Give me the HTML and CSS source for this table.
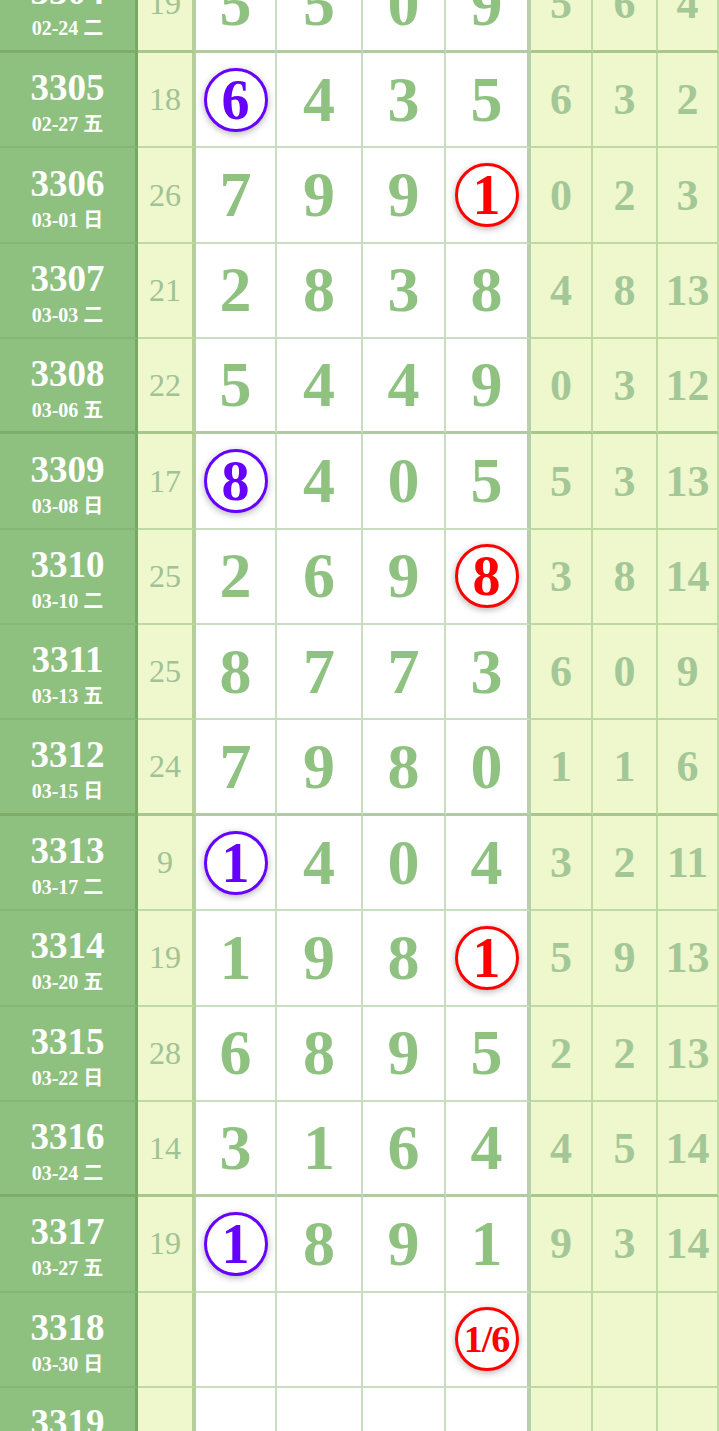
FILE: index.html
```html
<!DOCTYPE html>
<html lang="zh">
  <head>
    <meta charset="UTF-8" />
    <meta name="viewport" content="width=device-width, initial-scale=1.0" />
    <title>走势图</title>
    <link rel="stylesheet" href="styles.css">
  </head>
  <body>
    <div class="chart">
      <div class="row group">
        <div class="issue"><b>3304</b><span>02-24 二</span></div>
        <div class="sum">19</div>
        <div class="num">5</div><div class="num">5</div><div class="num">0</div><div class="num last">9</div>
        <div class="gap">5</div><div class="gap">6</div><div class="gap">4</div>
      </div>
      <div class="row">
        <div class="issue"><b>3305</b><span>02-27 五</span></div>
        <div class="sum">18</div>
        <div class="num"><i class="ball blue">6</i></div><div class="num">4</div><div class="num">3</div><div class="num last">5</div>
        <div class="gap">6</div><div class="gap">3</div><div class="gap">2</div>
      </div>
      <div class="row">
        <div class="issue"><b>3306</b><span>03-01 日</span></div>
        <div class="sum">26</div>
        <div class="num">7</div><div class="num">9</div><div class="num">9</div><div class="num last"><i class="ball red">1</i></div>
        <div class="gap">0</div><div class="gap">2</div><div class="gap">3</div>
      </div>
      <div class="row">
        <div class="issue"><b>3307</b><span>03-03 二</span></div>
        <div class="sum">21</div>
        <div class="num">2</div><div class="num">8</div><div class="num">3</div><div class="num last">8</div>
        <div class="gap">4</div><div class="gap">8</div><div class="gap">13</div>
      </div>
      <div class="row group">
        <div class="issue"><b>3308</b><span>03-06 五</span></div>
        <div class="sum">22</div>
        <div class="num">5</div><div class="num">4</div><div class="num">4</div><div class="num last">9</div>
        <div class="gap">0</div><div class="gap">3</div><div class="gap">12</div>
      </div>
      <div class="row">
        <div class="issue"><b>3309</b><span>03-08 日</span></div>
        <div class="sum">17</div>
        <div class="num"><i class="ball blue">8</i></div><div class="num">4</div><div class="num">0</div><div class="num last">5</div>
        <div class="gap">5</div><div class="gap">3</div><div class="gap">13</div>
      </div>
      <div class="row">
        <div class="issue"><b>3310</b><span>03-10 二</span></div>
        <div class="sum">25</div>
        <div class="num">2</div><div class="num">6</div><div class="num">9</div><div class="num last"><i class="ball red">8</i></div>
        <div class="gap">3</div><div class="gap">8</div><div class="gap">14</div>
      </div>
      <div class="row">
        <div class="issue"><b>3311</b><span>03-13 五</span></div>
        <div class="sum">25</div>
        <div class="num">8</div><div class="num">7</div><div class="num">7</div><div class="num last">3</div>
        <div class="gap">6</div><div class="gap">0</div><div class="gap">9</div>
      </div>
      <div class="row group">
        <div class="issue"><b>3312</b><span>03-15 日</span></div>
        <div class="sum">24</div>
        <div class="num">7</div><div class="num">9</div><div class="num">8</div><div class="num last">0</div>
        <div class="gap">1</div><div class="gap">1</div><div class="gap">6</div>
      </div>
      <div class="row">
        <div class="issue"><b>3313</b><span>03-17 二</span></div>
        <div class="sum">9</div>
        <div class="num"><i class="ball blue">1</i></div><div class="num">4</div><div class="num">0</div><div class="num last">4</div>
        <div class="gap">3</div><div class="gap">2</div><div class="gap">11</div>
      </div>
      <div class="row">
        <div class="issue"><b>3314</b><span>03-20 五</span></div>
        <div class="sum">19</div>
        <div class="num">1</div><div class="num">9</div><div class="num">8</div><div class="num last"><i class="ball red">1</i></div>
        <div class="gap">5</div><div class="gap">9</div><div class="gap">13</div>
      </div>
      <div class="row">
        <div class="issue"><b>3315</b><span>03-22 日</span></div>
        <div class="sum">28</div>
        <div class="num">6</div><div class="num">8</div><div class="num">9</div><div class="num last">5</div>
        <div class="gap">2</div><div class="gap">2</div><div class="gap">13</div>
      </div>
      <div class="row group">
        <div class="issue"><b>3316</b><span>03-24 二</span></div>
        <div class="sum">14</div>
        <div class="num">3</div><div class="num">1</div><div class="num">6</div><div class="num last">4</div>
        <div class="gap">4</div><div class="gap">5</div><div class="gap">14</div>
      </div>
      <div class="row">
        <div class="issue"><b>3317</b><span>03-27 五</span></div>
        <div class="sum">19</div>
        <div class="num"><i class="ball blue">1</i></div><div class="num">8</div><div class="num">9</div><div class="num last">1</div>
        <div class="gap">9</div><div class="gap">3</div><div class="gap">14</div>
      </div>
      <div class="row">
        <div class="issue"><b>3318</b><span>03-30 日</span></div>
        <div class="sum"></div>
        <div class="num"></div><div class="num"></div><div class="num"></div><div class="num last"><i class="ball red small">1/6</i></div>
        <div class="gap"></div><div class="gap"></div><div class="gap"></div>
      </div>
      <div class="row">
        <div class="issue"><b>3319</b><span>&nbsp;</span></div>
        <div class="sum"></div>
        <div class="num"></div><div class="num"></div><div class="num"></div><div class="num last"></div>
        <div class="gap"></div><div class="gap"></div><div class="gap"></div>
      </div>
    </div>
  </body>
</html>
```

FILE: styles.css
```css
* {
  margin: 0;
  padding: 0;
  box-sizing: border-box;
}

body {
  font-family: "Liberation Serif", "Noto Sans CJK SC", serif;
  background: #fff;
  overflow: hidden;
}

.chart {
  margin-top: -42.4px;
}

.row {
  display: grid;
  grid-template-columns: 138px 58px 81px 86px 83px 85px 62px 65px 1fr;
  height: 95.36px;
}

.row > div {
  display: flex;
  align-items: center;
  justify-content: center;
  border-right: 2px solid rgba(120, 170, 100, 0.4);
  border-bottom: 2px solid rgba(120, 170, 100, 0.4);
}

.row.group > div {
  border-bottom: 3px solid rgba(110, 160, 90, 0.55);
}

.issue {
  flex-direction: column;
  padding-top: 6px;
  background: #8ec07f;
  color: #fff;
  border-right: 3px solid rgba(90, 140, 70, 0.45) !important;
}

.issue b {
  font-size: 37px;
  font-weight: bold;
  line-height: 36px;
}

.issue span {
  font-size: 20px;
  font-weight: bold;
  line-height: 22px;
  margin-top: 7px;
  font-family: "Liberation Serif", "Noto Sans CJK SC", serif;
}

.sum {
  background: #eff7cc;
  color: #a0c295;
  font-size: 32px;
  border-right: 4px solid rgba(110, 160, 90, 0.45) !important;
}

.num {
  color: #8fc281;
  font-size: 64px;
  font-weight: bold;
}

.num.last {
  border-right: 4px solid rgba(110, 160, 90, 0.5) !important;
}

.gap {
  background: #eff8cc;
  color: #a4c798;
  font-size: 44px;
  font-weight: bold;
}

.ball {
  display: flex;
  align-items: center;
  justify-content: center;
  width: 64px;
  height: 64px;
  border: 3px solid;
  border-radius: 50%;
  background: #fff;
  font-style: normal;
  font-size: 56px;
  line-height: 1;
  box-shadow: 0 2px 7px rgba(0, 0, 0, 0.3);
}

.ball.blue {
  color: #6600ff;
}

.ball.red {
  color: #ff0000;
}

.ball.small {
  font-size: 38px;
  letter-spacing: -1px;
}
```
